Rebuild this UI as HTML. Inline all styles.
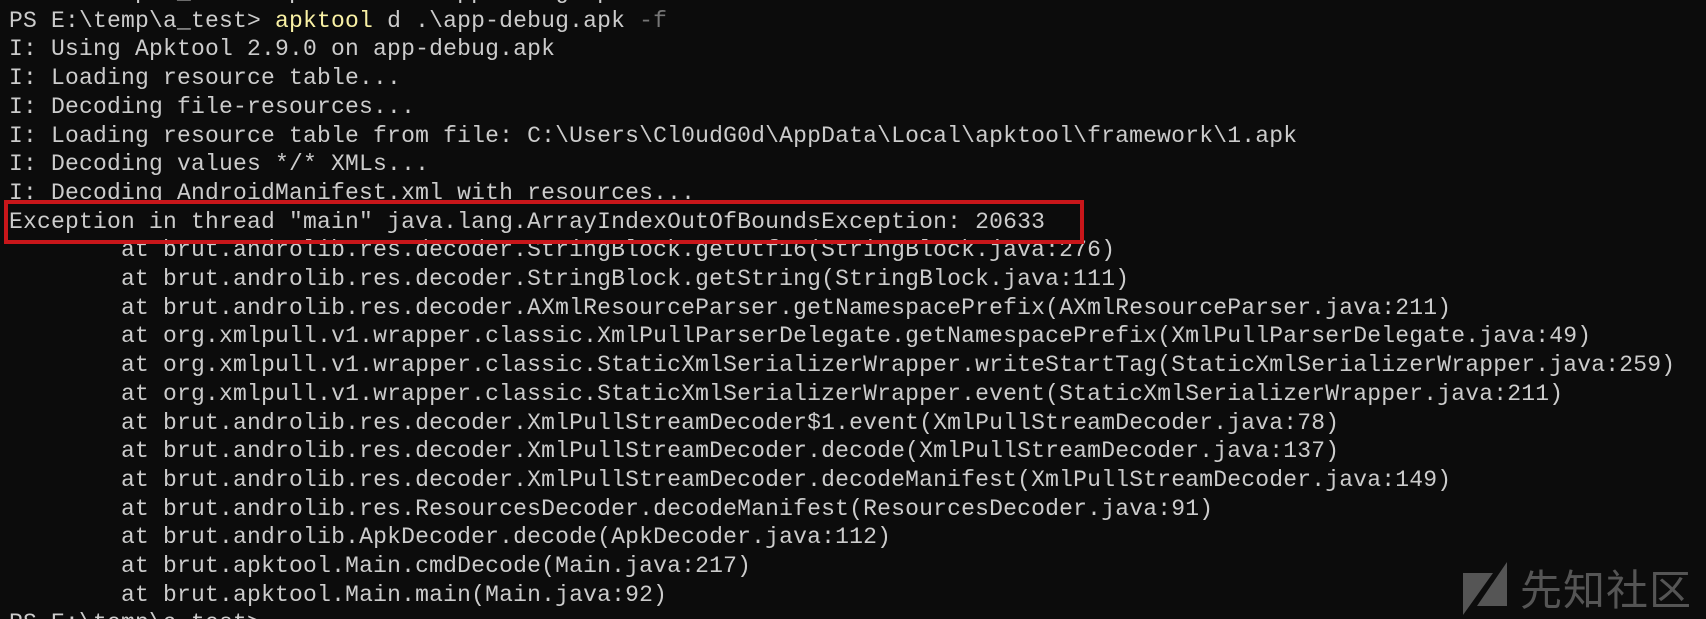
<!DOCTYPE html>
<html><head><meta charset="utf-8"><style>
html,body{margin:0;padding:0;background:#0c0c0c;width:1706px;height:619px;overflow:hidden;position:relative}
pre{position:absolute;left:9px;top:-22px;margin:0;font-family:"Liberation Mono",monospace;font-size:23px;letter-spacing:0.2px;line-height:28.7px;color:#cccccc;tab-size:8;white-space:pre}
.y{color:#f9f1a5}.g{color:#767676}
.box{position:absolute;left:4px;top:200px;width:1072px;height:36px;border:4px solid #c8161a}
.wm{position:absolute;left:1520px;top:562px;font-family:"Noto Sans CJK SC",sans-serif;font-size:42px;line-height:52px;color:#555;letter-spacing:1px}
svg{position:absolute;left:1463px;top:562px}
</style></head><body>
<pre>PS E:\temp\a_test&gt; apktool d .\app-debug.apk -f
PS E:\temp\a_test&gt; <span class="y">apktool</span> d .\app-debug.apk <span class="g">-f</span>
I: Using Apktool 2.9.0 on app-debug.apk
I: Loading resource table...
I: Decoding file-resources...
I: Loading resource table from file: C:\Users\Cl0udG0d\AppData\Local\apktool\framework\1.apk
I: Decoding values */* XMLs...
I: Decoding AndroidManifest.xml with resources...
Exception in thread "main" java.lang.ArrayIndexOutOfBoundsException: 20633
	at brut.androlib.res.decoder.StringBlock.getUtf16(StringBlock.java:276)
	at brut.androlib.res.decoder.StringBlock.getString(StringBlock.java:111)
	at brut.androlib.res.decoder.AXmlResourceParser.getNamespacePrefix(AXmlResourceParser.java:211)
	at org.xmlpull.v1.wrapper.classic.XmlPullParserDelegate.getNamespacePrefix(XmlPullParserDelegate.java:49)
	at org.xmlpull.v1.wrapper.classic.StaticXmlSerializerWrapper.writeStartTag(StaticXmlSerializerWrapper.java:259)
	at org.xmlpull.v1.wrapper.classic.StaticXmlSerializerWrapper.event(StaticXmlSerializerWrapper.java:211)
	at brut.androlib.res.decoder.XmlPullStreamDecoder$1.event(XmlPullStreamDecoder.java:78)
	at brut.androlib.res.decoder.XmlPullStreamDecoder.decode(XmlPullStreamDecoder.java:137)
	at brut.androlib.res.decoder.XmlPullStreamDecoder.decodeManifest(XmlPullStreamDecoder.java:149)
	at brut.androlib.res.ResourcesDecoder.decodeManifest(ResourcesDecoder.java:91)
	at brut.androlib.ApkDecoder.decode(ApkDecoder.java:112)
	at brut.apktool.Main.cmdDecode(Main.java:217)
	at brut.apktool.Main.main(Main.java:92)
PS E:\temp\a_test&gt;</pre>
<div class="box"></div>
<svg width="46" height="54" viewBox="0 0 46 54"><polygon points="0,11 30,11 0,53" fill="#555"/><polygon points="44,0 44,44 14,44" fill="#555"/></svg>
<div class="wm">先知社区</div>
</body></html>
